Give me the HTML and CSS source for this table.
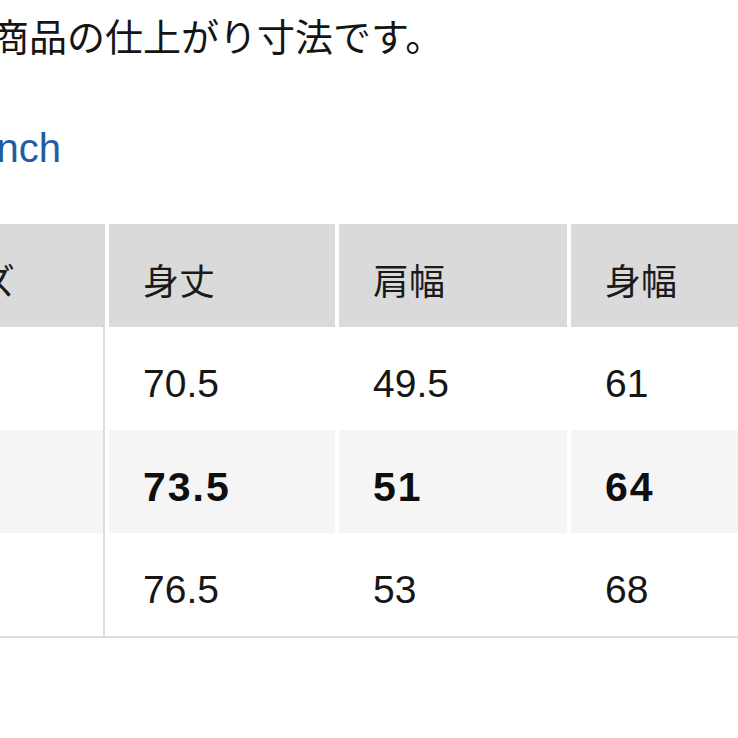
FILE: index.html
```html
<!DOCTYPE html>
<html lang="ja">
<head>
<meta charset="utf-8">
<title>サイズ表</title>
<link rel="stylesheet" href="styles.css">
</head>
<body>
<div class="page">
  <p class="note">こちらは商品の仕上がり寸法です。</p>
  <div class="units"><span class="unit">cm</span> / <span class="unit active">inch</span></div>
  <div class="chart">
    <div class="cell head first">サイズ</div>
    <div class="cell head">身丈</div>
    <div class="cell head">肩幅</div>
    <div class="cell head">身幅</div>

    <div class="cell first num">S</div>
    <div class="cell num">70.5</div>
    <div class="cell num">49.5</div>
    <div class="cell num">61</div>

    <div class="cell first num hl bold">M</div>
    <div class="cell num hl bold">73.5</div>
    <div class="cell num hl bold">51</div>
    <div class="cell num hl bold">64</div>

    <div class="cell first num">L</div>
    <div class="cell num">76.5</div>
    <div class="cell num">53</div>
    <div class="cell num">68</div>
  </div>
</div>
</body>
</html>
```

FILE: styles.css
```css
html, body {
  margin: 0;
  padding: 0;
  background: #ffffff;
  overflow: hidden;
}

body {
  width: 738px;
  height: 738px;
  color: #141414;
  font-family: "Liberation Sans", "Noto Sans CJK JP", sans-serif;
}

.page {
  margin-left: -157px;
  padding-top: 10px;
  width: 1000px;
}

.note {
  margin: 0 0 0 -4px;
  font-family: "Noto Sans CJK JP", sans-serif;
  font-size: 38px;
  line-height: 50px;
  white-space: nowrap;
  color: #151515;
}

.units {
  margin: 63px 0 0 58px;
  font-size: 40px;
  line-height: 50px;
  color: #141414;
  white-space: nowrap;
}

.unit.active {
  color: #1f5e9e;
}

.chart {
  margin: 51px 0 0 34px;
  display: grid;
  grid-template-columns: 228px 226px 228px 228px;
  grid-auto-rows: 103px;
  column-gap: 4px;
  border-bottom: 2px solid #dcdcdc;
  width: 922px;
}

.cell {
  box-sizing: border-box;
  display: flex;
  align-items: center;
  padding-left: 34px;
  white-space: nowrap;
}

.cell.first {
  padding-left: 31px;
}

.head {
  background: #dadada;
  font-family: "Noto Sans CJK JP", sans-serif;
  font-size: 36px;
  line-height: 50px;
  padding-top: 7px;
  color: #1a1a1a;
}

.num {
  font-family: "Liberation Sans", sans-serif;
  font-size: 39px;
  line-height: 50px;
  padding-top: 11px;
  color: #161616;
}

.first.num {
  border-right: 2px solid #dcdcdc;
}

.hl {
  background: #f5f5f5;
}

.bold {
  font-weight: 700;
  font-size: 41px;
  letter-spacing: 2px;
  color: #0e0e0e;
}
```
